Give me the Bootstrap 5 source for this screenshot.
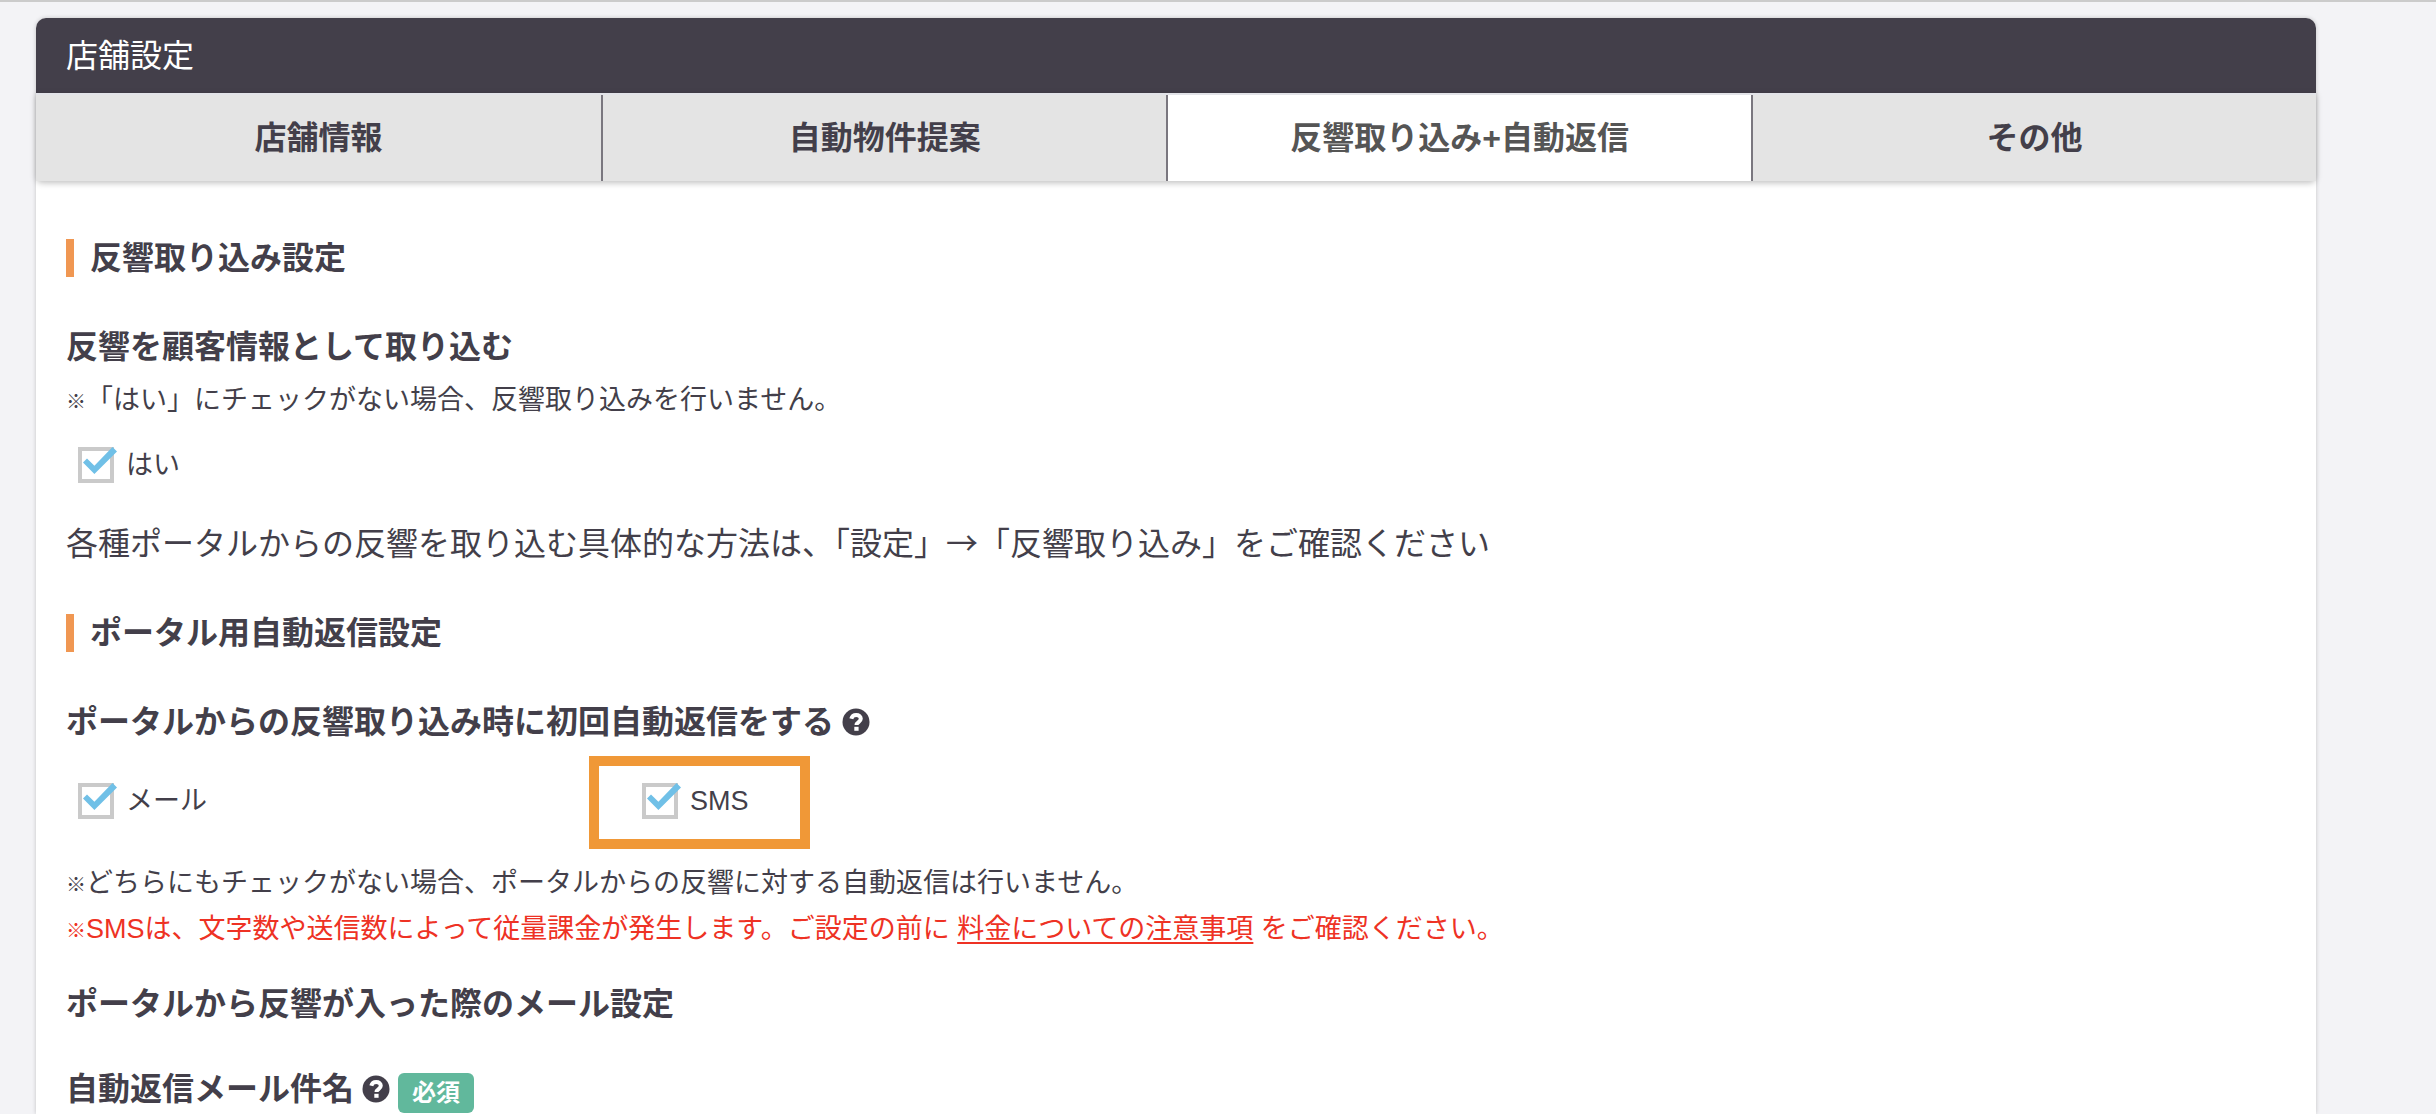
<!DOCTYPE html>
<html lang="ja">
<head>
<meta charset="utf-8">
<meta name="viewport" content="width=device-width, initial-scale=1">
<title>店舗設定</title>
<link href="https://cdn.jsdelivr.net/npm/bootstrap@5.3.0/dist/css/bootstrap.min.css" rel="stylesheet">
<style>
  body {
    background: #f3f3f6;
    color: #433f4a;
    font-family: "Liberation Sans", "Noto Sans CJK JP", sans-serif;
    font-size: 32px;
    line-height: 48px;
  }
  .page-wrap { border-top: 2px solid #cbcbcb; padding: 16px 120px 0 36px; }
  .settings-card {
    border: 0;
    border-radius: 10px 10px 0 0;
    box-shadow: 0 0 4px rgba(0, 0, 0, .2);
    color: inherit;
  }
  .settings-head {
    min-height: 75px;
    padding: 0 30px;
    border-radius: 10px 10px 0 0;
    background: #433f4a;
    color: #fff;
    font-size: 32px;
    line-height: 48px;
  }
  .settings-tabs {
    border-top: 2px solid #e2e3e8;
    border-radius: 0 0 6px 6px;
    box-shadow: 0 2px 6px rgba(0, 0, 0, .25);
    z-index: 1;
  }
  .settings-tabs .nav-item { flex: 1 1 0; }
  .settings-tabs .nav-link {
    height: 86px;
    padding: 0 122px;
    border-radius: 0;
    background: #e4e4e4;
    color: #433f4a;
    font-weight: 700;
    white-space: nowrap;
  }
  .settings-tabs .nav-item + .nav-item .nav-link { border-left: 2px solid #7a777f; }
  .settings-tabs .nav-link.active { background: #fff; color: #555; }
  .settings-body { padding: 58px 30px 0; }
  .section-title {
    margin: 0 0 46px;
    padding-left: 16px;
    border-left: 8px solid #f09752;
    font-size: 32px;
    line-height: 38px;
    font-weight: 700;
  }
  .item-title { margin: 0; font-size: 32px; line-height: 48px; font-weight: 700; }
  .note-text { margin: 0; font-size: 27px; line-height: 46px; }
  .note-mark { font-size: 20px; font-weight: 700; line-height: 20px; }
  .arrow-mark { font-family: "Noto Sans CJK JP", sans-serif; line-height: 32px; }
  .note-alert, .note-alert a { color: #ee3224; }
  .note-alert a { text-decoration-thickness: 2px; text-underline-offset: 4px; }
  .check-row { --bs-gutter-x: 36px; }
  .check-item { min-height: 36px; padding-left: 12px; font-size: 27px; line-height: 36px; }
  .check-item .form-check-input {
    width: 40px;
    height: 36px;
    margin: 0 8px 0 0;
    border: 0;
    border-radius: 0;
    background: url("data:image/svg+xml,%3Csvg xmlns='http://www.w3.org/2000/svg' viewBox='0 0 40 36'%3E%3Cpath fill='none' stroke='%23cacaca' stroke-width='4' d='M2 2h32v32H2z'/%3E%3C/svg%3E") 0 0 / 40px 36px no-repeat;
  }
  .check-item .form-check-input:checked {
    background: url("data:image/svg+xml,%3Csvg xmlns='http://www.w3.org/2000/svg' viewBox='0 0 40 36'%3E%3Cpath fill='none' stroke='%23cacaca' stroke-width='4' d='M2 2h32v32H2z'/%3E%3Cpath fill='%2370c0e7' d='M5 15.5l4-4 7.4 7.2L34.5 0 39 4.500 16.400 27z'/%3E%3C/svg%3E") 0 0 / 40px 36px no-repeat;
  }
  .highlight-frame {
    position: absolute;
    top: -27px;
    left: -41px;
    width: 221px;
    height: 93px;
    border: 10px solid #f09837;
    pointer-events: none;
  }
  .help-btn { width: 28px; height: 28px; color: inherit; }
  .help-btn svg { width: 28px; height: 28px; }
  .required-tag {
    padding: 8px 14px;
    border-radius: 6px;
    background: #61b89c;
    color: #fff;
    font-size: 24px;
    line-height: 24px;
  }
  .gap-note { margin-top: 6px; }
  .gap-check { margin-top: 24px; }
  .gap-wide { margin-top: 37px; }
  .gap-section { margin-top: 46px; }
  .gap-foot { margin-top: 41px; }
  .gap-sub { margin-top: 28px; }
</style>
<script src="https://cdn.jsdelivr.net/npm/bootstrap@5.3.0/dist/js/bootstrap.bundle.min.js"></script>
</head>
<body>
<div class="page-wrap vh-100 overflow-hidden d-flex flex-column">
  <main class="card settings-card flex-grow-1">
    <h1 class="settings-head d-flex align-items-center fw-normal m-0">店舗設定</h1>
    <ul class="nav settings-tabs flex-nowrap position-relative overflow-visible">
      <li class="nav-item"><a class="nav-link d-flex align-items-center justify-content-center" href="#">店舗情報</a></li>
      <li class="nav-item"><a class="nav-link d-flex align-items-center justify-content-center" href="#">自動物件提案</a></li>
      <li class="nav-item"><a class="nav-link active d-flex align-items-center justify-content-center" href="#" aria-current="page">反響取り込み+自動返信</a></li>
      <li class="nav-item"><a class="nav-link d-flex align-items-center justify-content-center" href="#">その他</a></li>
    </ul>
    <form class="settings-body">
      <h2 class="section-title">反響取り込み設定</h2>
      <h3 class="item-title">反響を顧客情報として取り込む</h3>
      <p class="note-text gap-note"><span class="note-mark">※</span>「はい」にチェックがない場合、反響取り込みを行いません。</p>
      <div class="check-item d-flex align-items-center gap-check">
        <input class="form-check-input" type="checkbox" id="importYes" checked>
        <label for="importYes">はい</label>
      </div>
      <p class="gap-wide mb-0">各種ポータルからの反響を取り込む具体的な方法は、「設定」<span class="arrow-mark">→</span>「反響取り込み」をご確認ください</p>

      <h2 class="section-title gap-section">ポータル用自動返信設定</h2>
      <div class="d-flex align-items-center gap-2">
        <h3 class="item-title">ポータルからの反響取り込み時に初回自動返信をする</h3>
        <button type="button" class="help-btn btn p-0 border-0 d-flex" aria-label="ヘルプ">
          <svg viewBox="0 0 28 28" aria-hidden="true"><circle cx="14" cy="14" r="13.500" fill="currentColor"/><path d="M9.300 10.800C10 8.200 11.700 7 14.200 7c2.700 0 4.600 1.500 4.600 3.800 0 3.300-4.300 3.200-4.300 6.200" fill="none" stroke="#fff" stroke-width="4"/><path d="M12.300 18.800h4.300v4h-4.300z" fill="#fff"/></svg>
        </button>
      </div>
      <div class="row check-row gap-wide">
        <div class="col-3">
          <div class="check-item d-flex align-items-center">
            <input class="form-check-input" type="checkbox" id="replyMail" checked>
            <label for="replyMail">メール</label>
          </div>
        </div>
        <div class="col-3">
          <div class="check-item d-flex align-items-center position-relative">
            <input class="form-check-input" type="checkbox" id="replySms" checked>
            <label for="replySms">SMS</label>
            <span class="highlight-frame"></span>
          </div>
        </div>
      </div>
      <p class="note-text gap-foot"><span class="note-mark">※</span>どちらにもチェックがない場合、ポータルからの反響に対する自動返信は行いません。</p>
      <p class="note-text note-alert"><span class="note-mark">※</span>SMSは、文字数や送信数によって従量課金が発生します。ご設定の前に <a href="#">料金についての注意事項</a> をご確認ください。</p>
      <h3 class="item-title gap-sub">ポータルから反響が入った際のメール設定</h3>
      <div class="d-flex align-items-center gap-2 gap-wide">
        <h3 class="item-title">自動返信メール件名</h3>
        <button type="button" class="help-btn btn p-0 border-0 d-flex" aria-label="ヘルプ">
          <svg viewBox="0 0 28 28" aria-hidden="true"><circle cx="14" cy="14" r="13.500" fill="currentColor"/><path d="M9.300 10.800C10 8.200 11.700 7 14.200 7c2.700 0 4.600 1.500 4.600 3.800 0 3.300-4.300 3.200-4.300 6.200" fill="none" stroke="#fff" stroke-width="4"/><path d="M12.300 18.800h4.300v4h-4.300z" fill="#fff"/></svg>
        </button>
        <span class="required-tag badge align-self-end">必須</span>
      </div>
    </form>
  </main>
</div>
</body>
</html>
